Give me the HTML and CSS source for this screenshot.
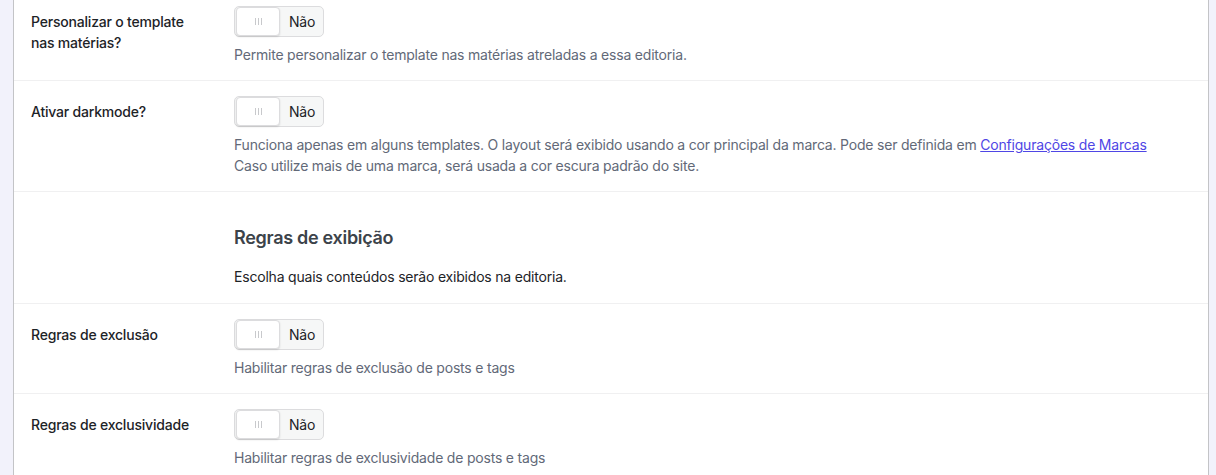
FILE: index.html
```html
<!DOCTYPE html>
<html lang="pt-BR">
<head>
<meta charset="utf-8">
<link rel="stylesheet" href="styles.css">
</head>
<body>
<div class="page">
  <div class="card">
    <div class="row">
      <div class="label">Personalizar o template<br>nas matérias?</div>
      <div class="field">
        <div class="toggle"><span class="knob"><span class="grip"></span></span><span class="state">Não</span></div>
        <p class="desc">Permite personalizar o template nas matérias atreladas a essa editoria.</p>
      </div>
    </div>
    <div class="row">
      <div class="label">Ativar darkmode?</div>
      <div class="field">
        <div class="toggle"><span class="knob"><span class="grip"></span></span><span class="state">Não</span></div>
        <p class="desc">Funciona apenas em alguns templates. O layout será exibido usando a cor principal da marca. Pode ser definida em <a href="#">Configurações de Marcas</a><br>Caso utilize mais de uma marca, será usada a cor escura padrão do site.</p>
      </div>
    </div>
    <div class="row section">
      <div class="label"></div>
      <div class="field">
        <h3 class="heading">Regras de exibição</h3>
        <p class="intro">Escolha quais conteúdos serão exibidos na editoria.</p>
      </div>
    </div>
    <div class="row">
      <div class="label">Regras de exclusão</div>
      <div class="field">
        <div class="toggle"><span class="knob"><span class="grip"></span></span><span class="state">Não</span></div>
        <p class="desc">Habilitar regras de exclusão de posts e tags</p>
      </div>
    </div>
    <div class="row last">
      <div class="label">Regras de exclusividade</div>
      <div class="field">
        <div class="toggle"><span class="knob"><span class="grip"></span></span><span class="state">Não</span></div>
        <p class="desc">Habilitar regras de exclusividade de posts e tags</p>
      </div>
    </div>
  </div>
</div>
</body>
</html>
```

FILE: styles.css
```css
* { box-sizing: border-box; }
html {
  overflow: hidden;
  background: #f2f2fb;
}
body {
  margin: 0;
  padding: 0;
  font-family: Inter, "Noto Sans", sans-serif;
  font-size: 14px;
  letter-spacing: -0.2px;
}
.page {
  padding: 1px 7px 0 13px;
}
.card {
  margin-top: -10px;
  height: 484px;
  overflow: hidden;
  background: #fff;
  border-left: 1px solid #c3c4c7;
  border-right: 1px solid #c3c4c7;
}
.row {
  display: flex;
  border-bottom: 1px solid #f0f0f1;
  padding: 15px 0 15px 0;
}
.row.last { border-bottom: 0; padding-bottom: 0; }
.label {
  width: 220px;
  padding: 5px 0 0 17px;
  color: #1d2327;
  font-weight: 500;
  line-height: 21px;
  flex-shrink: 0;
}
.field { flex: 1; }
.toggle {
  display: inline-flex;
  align-items: center;
  height: 31px;
  width: 90px;
  border: 1px solid #dcdcde;
  border-radius: 5px;
  background: #f6f7f7;
  padding: 1px;
}
.knob {
  width: 44px;
  height: 29px;
  background: #fff;
  border: 1px solid #dcdcde;
  border-radius: 4px;
  box-shadow: 0 1px 2px rgba(0,0,0,0.12);
  display: flex;
  align-items: center;
  justify-content: center;
}
.grip {
  width: 7px;
  height: 7px;
  border-left: 1px solid #c8c9cc;
  border-right: 1px solid #c8c9cc;
  position: relative;
}
.grip::after {
  content: "";
  position: absolute;
  left: 2px;
  top: 0;
  width: 1px;
  height: 7px;
  background: #c8c9cc;
}
.state {
  margin-left: 9px;
  color: #1d2327;
  font-size: 14px;
}
.desc {
  margin: 7px 0 0;
  color: #626978;
  line-height: 21px;
}
.desc a { color: #4f46e5; text-decoration: underline; }
.section { padding: 34px 0 16px; }
.heading {
  margin: 0;
  font-size: 18px;
  font-weight: 600;
  line-height: 23px;
  letter-spacing: -0.3px;
  color: #3c434a;
}
.intro {
  margin: 17px 0 0;
  color: #1d2327;
  line-height: 21px;
}
```
